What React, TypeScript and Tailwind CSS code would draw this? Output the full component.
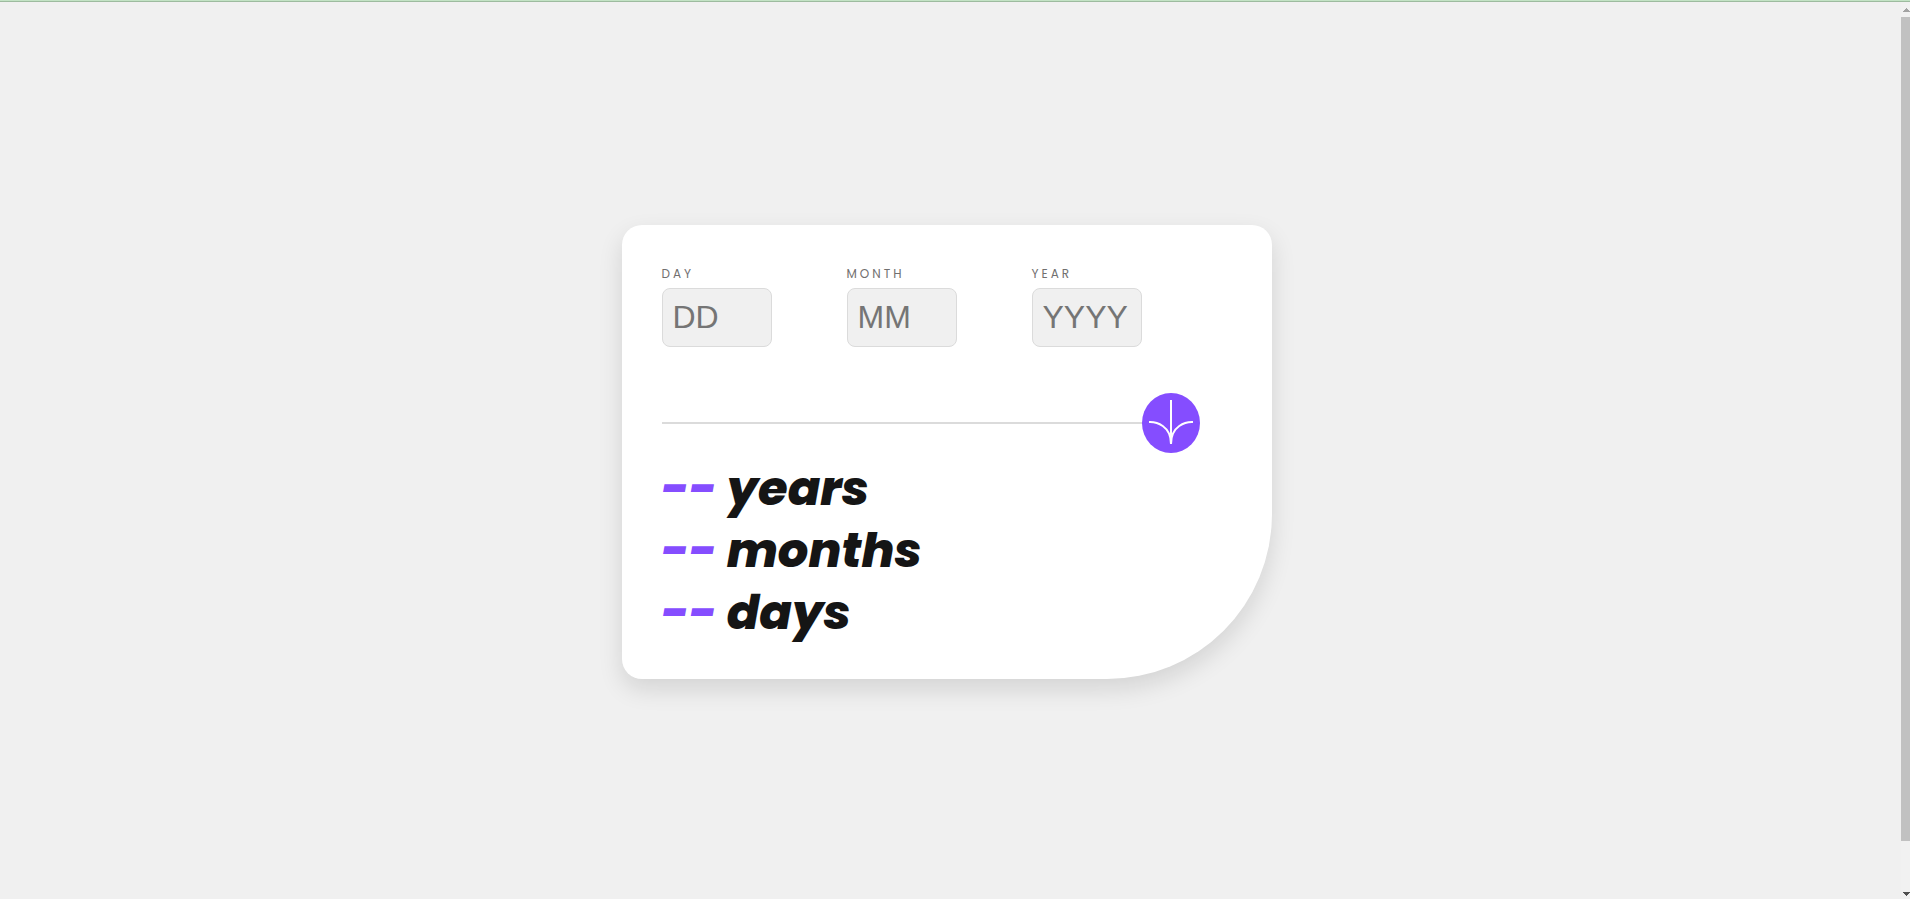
import { useState } from "react";

type FieldProps = {
  id: string;
  label: string;
  placeholder: string;
  value: string;
  onChange: (value: string) => void;
};

function Field({ id, label, placeholder, value, onChange }: FieldProps) {
  return (
    <div className="flex w-[110px] flex-col gap-1">
      <label htmlFor={id} className="text-xs leading-5 tracking-[3px] text-[#716f6f]">
        {label}
      </label>
      <input
        id={id}
        type="text"
        inputMode="numeric"
        placeholder={placeholder}
        value={value}
        onChange={(e) => onChange(e.target.value)}
        className="h-[59px] w-full rounded-lg border border-[#dbdbdb] bg-[#f0f0f0] px-[10px] font-['Liberation_Sans',Arial,sans-serif] text-[32px] text-[#151515] outline-none placeholder:text-[#757575]"
      />
    </div>
  );
}

function Result({ value, unit }: { value: string; unit: string }) {
  return (
    <p>
      <span className="text-[#854dff]">{value}</span> {unit}
    </p>
  );
}

export default function App() {
  const [day, setDay] = useState("");
  const [month, setMonth] = useState("");
  const [year, setYear] = useState("");
  const [age, setAge] = useState({ years: "--", months: "--", days: "--" });

  const calculate = () => {
    const birth = new Date(Number(year), Number(month) - 1, Number(day));
    const now = new Date();
    if (!day || !month || !year || isNaN(birth.getTime()) || birth > now) return;
    let y = now.getFullYear() - birth.getFullYear();
    let m = now.getMonth() - birth.getMonth();
    let d = now.getDate() - birth.getDate();
    if (d < 0) {
      m--;
      d += new Date(now.getFullYear(), now.getMonth(), 0).getDate();
    }
    if (m < 0) {
      y--;
      m += 12;
    }
    setAge({ years: String(y), months: String(m), days: String(d) });
  };

  return (
    <div className="flex min-h-screen flex-col bg-[#f0f0f0] font-['Poppins',sans-serif]">
      <div className="h-[2px] border-b border-[#9dbb9f] bg-[#c3e3c5]"></div>
      <div className="flex flex-1">
        <main className="flex flex-1 items-center justify-center pt-[2px] pr-2">
          <form
            onSubmit={(e) => {
              e.preventDefault();
              calculate();
            }}
            className="w-full max-w-[650px] rounded-[20px] rounded-br-[165px] bg-white px-10 pt-[39px] pb-[35px] shadow-[0_10px_25px_rgba(0,0,0,0.12)]"
          >
            <div className="flex gap-[75px]">
              <Field id="day" label="DAY" placeholder="DD" value={day} onChange={setDay} />
              <Field id="month" label="MONTH" placeholder="MM" value={month} onChange={setMonth} />
              <Field id="year" label="YEAR" placeholder="YYYY" value={year} onChange={setYear} />
            </div>
            <div className="mt-[46px] mr-8 flex items-center">
              <div className="h-[2px] flex-1 bg-[#dbdbdb]"></div>
              <button
                type="submit"
                aria-label="Calculate age"
                className="flex h-[60px] w-[58px] items-center justify-center rounded-[50%] bg-[#854dff] pb-[2px]"
              >
                <svg width="46" height="44" viewBox="0 0 46 44" fill="none" stroke="#fff" strokeWidth="2">
                  <path d="M1 22.019C8.333 21.686 23 25.616 23 44M23 44V0M45 22.019C37.667 21.686 23 25.616 23 44" />
                </svg>
              </button>
            </div>
            <div className="mt-[5px] text-5xl leading-[62px] font-extrabold text-[#151515] italic">
              <Result value={age.years} unit="years" />
              <Result value={age.months} unit="months" />
              <Result value={age.days} unit="days" />
            </div>
          </form>
        </main>
        <div aria-hidden="true" className="flex w-[9px] flex-col bg-[#f1f1f1]">
          <svg width="9" height="15" viewBox="0 0 9 15" fill="#a3a3a3" shapeRendering="crispEdges">
            <path d="M5 6h1v1h1v1h1v1h1v1H2V9h1V8h1V7h1z" />
          </svg>
          <div className="mb-[42px] flex-1 bg-[#c1c1c1]"></div>
          <svg width="9" height="16" viewBox="0 0 9 16" fill="#505050" shapeRendering="crispEdges">
            <path d="M2 9h7v1H8v1H7v1H6v1H5v-1H4v-1H3v-1H2z" />
          </svg>
        </div>
      </div>
    </div>
  );
}
